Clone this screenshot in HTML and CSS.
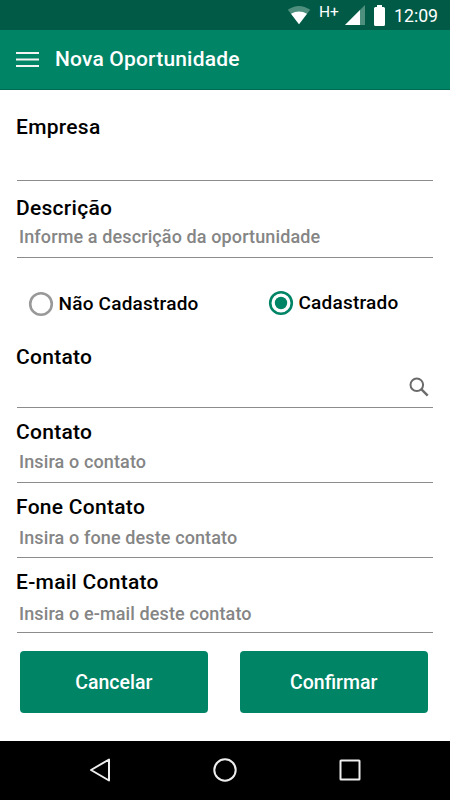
FILE: index.html
```html
<!DOCTYPE html>
<html lang="pt-BR">
<head>
<meta charset="utf-8">
<title>Nova Oportunidade</title>
<link rel="stylesheet" href="styles.css">
</head>
<body>
<div class="status-bar">
  <svg class="wifi" width="24" height="20" viewBox="0 0 24 20"><path d="M.8 4.800Q12-2.800 23.200 4.800L12 19.200Z" fill="#4f8f7e"/><path d="M4 8.800Q12 4 20 8.800L12 19.200Z" fill="#fff"/></svg>
  <span class="network">H+</span>
  <svg class="signal" width="20" height="20" viewBox="0 0 20 20"><path d="M20 0V20H0Z" fill="#4f8f7e"/><path d="M15 5V20H0Z" fill="#fff"/></svg>
  <svg class="battery" width="11" height="21" viewBox="0 0 11 21"><path d="M3 0H8V2H9.500Q11 2 11 3.500V19.500Q11 21 9.500 21H1.500Q0 21 0 19.500V3.500Q0 2 1.500 2H3Z" fill="#fff"/></svg>
  <span class="clock">12:09</span>
</div>
<header class="app-bar">
  <svg class="menu" width="23" height="17" viewBox="0 0 23 17"><path d="M0 2H23M0 8.500H23M0 15H23" stroke="#f2f5f4" stroke-width="2.200"/></svg>
  <h1 class="title">Nova Oportunidade</h1>
</header>
<main class="form">
  <div class="field company"><label class="label">Empresa</label></div>
  <div class="field description"><label class="label">Descrição</label><span class="hint">Informe a descrição da oportunidade</span></div>
  <div class="choices">
    <div class="choice"><svg width="26" height="26" viewBox="0 0 26 26"><circle cx="13" cy="13" r="10.800" fill="none" stroke="#999" stroke-width="2.600"/></svg><span>Não Cadastrado</span></div>
    <div class="choice checked"><svg width="26" height="26" viewBox="0 0 26 26"><circle cx="13" cy="13" r="10.800" fill="none" stroke="#008466" stroke-width="2.600"/><circle cx="13" cy="13" r="6.200" fill="#008466"/></svg><span>Cadastrado</span></div>
  </div>
  <div class="field search"><label class="label">Contato</label>
    <svg class="lens" width="20" height="20" viewBox="0 0 20 20"><circle cx="7.800" cy="7.800" r="6.300" fill="none" stroke="#6b6b6b" stroke-width="2"/><path d="M12.200 12.200L18.700 18.700" stroke="#6b6b6b" stroke-width="2.400"/></svg>
  </div>
  <div class="field"><label class="label">Contato</label><span class="hint">Insira o contato</span></div>
  <div class="field phone"><label class="label">Fone Contato</label><span class="hint">Insira o fone deste contato</span></div>
  <div class="field email"><label class="label">E-mail Contato</label><span class="hint">Insira o e-mail deste contato</span></div>
  <div class="actions"><button class="button">Cancelar</button><button class="button">Confirmar</button></div>
</main>
<nav class="nav-bar">
  <svg width="24" height="26" viewBox="0 0 24 26"><path d="M21 2.500V23.500L3 13Z" fill="none" stroke="#eee" stroke-width="2" stroke-linejoin="round"/></svg>
  <svg width="24" height="26" viewBox="0 0 24 26"><circle cx="12" cy="13" r="10.700" fill="none" stroke="#eee" stroke-width="2"/></svg>
  <svg width="24" height="26" viewBox="0 0 24 26"><rect x="2.500" y="3.500" width="19" height="19" rx=".5" fill="none" stroke="#eee" stroke-width="2"/></svg>
</nav>
</body>
</html>
```
FILE: styles.css
```css
* { box-sizing: border-box; }
body {
  margin: 0;
  width: 450px;
  height: 800px;
  display: flex;
  flex-direction: column;
  overflow: hidden;
  background: #fff;
  color: #000;
  font-family: Roboto, sans-serif;
  font-weight: 500;
}
svg { display: block; flex: none; }
.status-bar {
  height: 30px;
  display: flex;
  align-items: flex-start;
  padding: 5px 11px 0 287px;
  background: #005a46;
  color: #fff;
}
.network { width: 19px; margin: -2px 0 0 8px; font-size: 15.5px; line-height: 18px; font-weight: 400; white-space: nowrap; }
.signal { margin-left: 7px; }
.battery { margin-left: 9px; }
.clock { margin-left: 9px; font-size: 17.7px; line-height: 22px; font-weight: 400; }
.app-bar {
  height: 60px;
  display: flex;
  align-items: flex-start;
  padding: 21px 0 0 16px;
  background: #008466;
  border-bottom: 1px solid #006b53;
}
.title { margin: -5px 0 0 16px; font-size: 21px; line-height: 26px; font-weight: 500; letter-spacing: .18px; color: #fff; white-space: nowrap; }
.form { flex: 1; padding: 25px 17px 0; }
.field {
  height: 63px;
  margin-top: 12px;
  border-bottom: 1px solid #8c8c8c;
}
.label { display: block; margin-left: -1px; font-size: 21px; line-height: 24px; letter-spacing: .28px; }
.hint { display: block; margin: 7px 0 0 2px; font-size: 18px; line-height: 22px; letter-spacing: .12px; color: #858585; }
.company { height: 66px; margin-top: 0; }
.description { height: 62px; margin-top: 15px; }
.description .hint { margin-top: 6px; }
.phone .hint { margin-top: 8px; }
.email .hint { margin-top: 9px; }
.choices {
  height: 87px;
  display: grid;
  grid-template-columns: 240px 1fr;
  padding: 33px 0 0 11px;
}
.choice { display: flex; align-items: center; gap: 4.5px; height: 26px; font-size: 19px; line-height: 24px; letter-spacing: .22px; white-space: nowrap; }
.checked { margin-top: -1px; }
.search { margin-top: 0; }
.lens { margin: 8px 4.500px 0 auto; }
.actions { display: flex; gap: 32.5px; padding: 18px 0 0 3px; }
.button {
  width: 187.5px;
  height: 62px;
  padding: 0;
  border: 0;
  border-radius: 4px;
  background: #008466;
  color: #fff;
  font: 500 19.5px Roboto, sans-serif;
}
.nav-bar {
  height: 59px;
  display: flex;
  justify-content: space-between;
  padding: 16px 88px 0;
  background: #000;
}
```
